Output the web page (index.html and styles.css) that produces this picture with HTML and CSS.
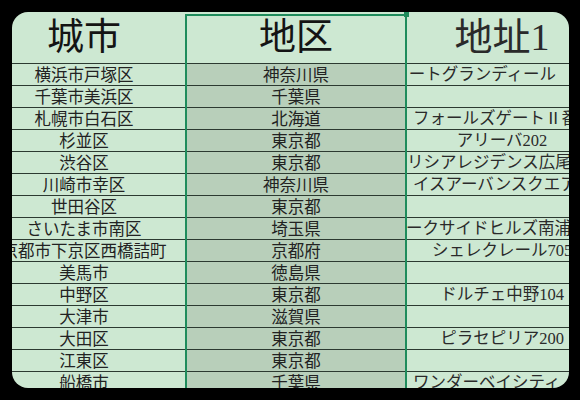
FILE: index.html
```html
<!DOCTYPE html>
<html lang="ja">
<head>
<meta charset="utf-8">
<link rel="stylesheet" href="styles.css">
</head>
<body>
<div class="card">
  <div class="sheet">
    <div class="cell head col-a">城市</div>
    <div class="cell head col-b active">地区</div>
    <div class="cell head col-c">地址1</div>

    <div class="cell col-a">横浜市戸塚区</div><div class="cell col-b">神奈川県</div><div class="cell col-c end"><span>ートグランディール</span></div>
    <div class="cell col-a">千葉市美浜区</div><div class="cell col-b">千葉県</div><div class="cell col-c"></div>
    <div class="cell col-a">札幌市白石区</div><div class="cell col-b">北海道</div><div class="cell col-c start"><span>フォールズゲートⅡ番館</span></div>
    <div class="cell col-a">杉並区</div><div class="cell col-b">東京都</div><div class="cell col-c"><span>アリーバ202</span></div>
    <div class="cell col-a">渋谷区</div><div class="cell col-b">東京都</div><div class="cell col-c start tight"><span>リシアレジデンス広尾</span></div>
    <div class="cell col-a">川崎市幸区</div><div class="cell col-b">神奈川県</div><div class="cell col-c start"><span>イスアーバンスクエア</span></div>
    <div class="cell col-a">世田谷区</div><div class="cell col-b">東京都</div><div class="cell col-c"></div>
    <div class="cell col-a">さいたま市南区</div><div class="cell col-b">埼玉県</div><div class="cell col-c start flush"><span>ークサイドヒルズ南浦和</span></div>
    <div class="cell col-a">京都市下京区西橋詰町</div><div class="cell col-b">京都府</div><div class="cell col-c"><span>シェレクレール705</span></div>
    <div class="cell col-a">美馬市</div><div class="cell col-b">徳島県</div><div class="cell col-c"></div>
    <div class="cell col-a">中野区</div><div class="cell col-b">東京都</div><div class="cell col-c"><span>ドルチェ中野104</span></div>
    <div class="cell col-a">大津市</div><div class="cell col-b">滋賀県</div><div class="cell col-c"></div>
    <div class="cell col-a">大田区</div><div class="cell col-b">東京都</div><div class="cell col-c"><span>ピラセピリア200</span></div>
    <div class="cell col-a">江東区</div><div class="cell col-b">東京都</div><div class="cell col-c"></div>
    <div class="cell col-a">船橋市</div><div class="cell col-b">千葉県</div><div class="cell col-c start"><span>ワンダーベイシティ</span></div>
  </div>
  <div class="selection"><div class="handle"></div></div>
</div>
</body>
</html>
```
FILE: styles.css
```css
html, body {
  margin: 0;
  padding: 0;
  background: #000;
}
body {
  width: 580px;
  height: 400px;
  overflow: hidden;
}
.card {
  position: relative;
  margin: 12px 0 0 12px;
  width: 557px;
  height: 376px;
  border-radius: 16px;
  overflow: hidden;
  background: #cde8d2;
}
.sheet {
  display: grid;
  grid-template-columns: 174px 220px 192px;
  grid-template-rows: 52px;
  grid-auto-rows: 22px;
}
.cell {
  display: flex;
  align-items: center;
  justify-content: center;
  white-space: nowrap;
  box-sizing: border-box;
  border-bottom: 1px solid #2c3a31;
  font-family: "Noto Sans CJK JP", sans-serif;
  font-size: 16.5px;
  line-height: 21px;
  color: #222;
}
.head {
  font-family: "Liberation Serif", "Noto Sans CJK JP", serif;
  font-size: 37px;
  line-height: 51px;
  color: #141414;
}
.col-a {
  padding-right: 30px;
}
.col-b {
  background: #b8cfba;
}
.col-b.active {
  background: #cde8d2;
}
.col-c {
  overflow: hidden;
  font-family: "Liberation Serif", "Noto Sans CJK JP", serif;
  color: #2a2a2a;
}
.head.col-c {
  font-size: 38px;
  padding-left: 0;
}
.col-c.end {
  justify-content: flex-end;
  padding-right: 42px;
}
.col-c.start {
  justify-content: flex-start;
  padding-left: 7px;
}
.col-c.start.tight {
  padding-left: 1px;
}
.col-c.start.flush {
  padding-left: 0;
}
.col-c span {
  flex: none;
}
.selection {
  position: absolute;
  left: 173px;
  top: 2px;
  width: 222px;
  height: 420px;
  box-sizing: border-box;
  border: 2px solid #1f8c5c;
  pointer-events: none;
}
.handle {
  position: absolute;
  right: -4px;
  top: -4px;
  width: 5px;
  height: 5px;
  background: #1f8c5c;
}
```
